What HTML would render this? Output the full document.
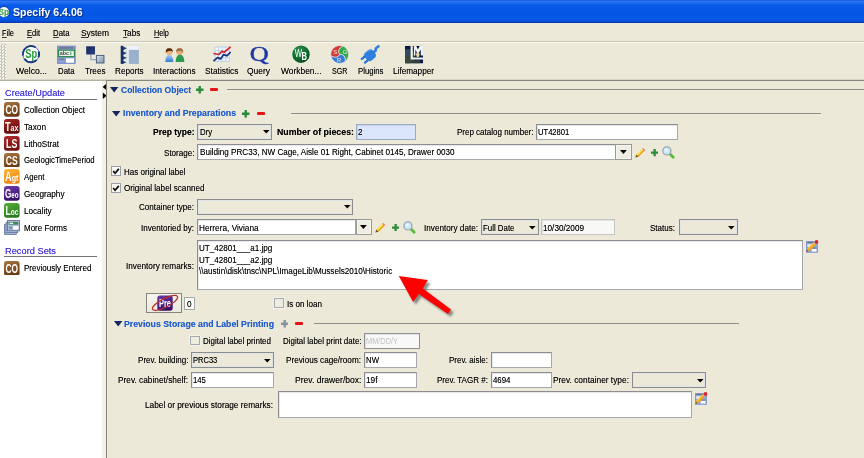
<!DOCTYPE html><html><head><meta charset="utf-8"><title>Specify 6.4.06</title><style>
html,body{margin:0;padding:0;}body{width:864px;height:458px;overflow:hidden;background:#ECE9D8;font-family:"Liberation Sans", sans-serif;position:relative;}
#app{position:absolute;left:0;top:0;width:864px;height:458px;overflow:hidden;}
#app div,#app svg{position:absolute;box-sizing:border-box;}
#app .t{white-space:nowrap;line-height:1;transform-origin:0 0;}
#app svg text{opacity:.999;}#app u{text-decoration:underline;text-underline-offset:1px;text-decoration-thickness:.8px;text-decoration-color:#3a3a3a;}
</style></head><body><div id="app">
<div style="left:0px;top:0px;width:864px;height:23px;background:linear-gradient(to bottom,#1654e0 0%,#2d79f4 6%,#1c6aee 13%,#075ae8 24%,#0456e4 60%,#065be9 80%,#0651dd 89%,#0841c6 96%,#0a38b4 100%);"></div>
<svg style="left:0;top:4px" width="12" height="16" viewBox="0 4 12 16"><circle cx="4" cy="11.7" r="5.6" fill="#16307a" opacity=".55"/><circle cx="4" cy="12.1" r="5.1" fill="#f6faf6"/><text x="-1.6" y="15" font-size="8.3" font-weight="bold" fill="#2f9e40" font-family="Liberation Sans, sans-serif">Sp</text></svg>
<div style="left:0px;top:41px;width:864px;height:1px;background:#c9c6b6;"></div>
<div style="left:0px;top:42px;width:864px;height:1px;background:#fbfaf4;"></div>
<div style="left:0px;top:44px;width:6px;height:35px;background:repeating-conic-gradient(#c6c4b6 0% 25%,#f7f6ef 0% 50%) 0 0/3px 3px;opacity:.95"></div>
<div style="left:0px;top:79px;width:864px;height:1px;background:#d8d5c8;"></div>
<div style="left:0px;top:80px;width:107px;height:1px;background:#b4b2a8;"></div>
<svg style="left:0;top:42px" width="440" height="24" viewBox="0 42 440 24"><circle cx="31" cy="54.1" r="8.3" fill="#fdfefd"/><circle cx="31" cy="54.1" r="8.2" fill="none" stroke="#4a64a8" stroke-width="0.9"/><circle cx="31" cy="54.1" r="8.1" fill="none" stroke="#1d3a86" stroke-width="2" stroke-dasharray="19 5 6 3 14 3.9" transform="rotate(170 31 54.1)"/><text x="25.3" y="57.7" font-size="12.4" font-weight="bold" fill="#1f9a36" textLength="11.9" lengthAdjust="spacingAndGlyphs" font-family="Liberation Sans, sans-serif">Sp</text><rect x="57.1" y="45.8" width="18.4" height="18" fill="#8ba0d6"/><rect x="57.6" y="46.3" width="17.4" height="17" fill="none" stroke="#7a8ec8" stroke-width="1"/><rect x="59" y="47.3" width="14.6" height="1.3" fill="#666a76"/><rect x="58.6" y="50.2" width="15.8" height="6.4" fill="#eef6ee" stroke="#2b8a4c" stroke-width="1.2"/><text x="59.8" y="55.2" font-size="5.4" font-weight="bold" fill="#444" font-family="Liberation Sans, sans-serif">abc</text><rect x="70.3" y="51.4" width="1" height="4" fill="#3a9a5a"/><rect x="59" y="58.6" width="5.4" height="1.4" fill="#767a8a"/><rect x="66" y="58.3" width="8" height="4.4" fill="#fff"/><defs><linearGradient id="tr1" x1="0" y1="0" x2="1" y2="1"><stop offset="0" stop-color="#16265c"/><stop offset="1" stop-color="#2b4486"/></linearGradient><linearGradient id="tr2" x1="0" y1="0" x2="1" y2="1"><stop offset="0" stop-color="#dfe5ea"/><stop offset="1" stop-color="#7d93ab"/></linearGradient></defs><path d="M90.9 54 V59.6 H96.5" fill="none" stroke="#92a8c0" stroke-width="1.3"/><rect x="86.2" y="46.3" width="8.8" height="8.2" fill="url(#tr1)"/><rect x="96.4" y="55.4" width="7.6" height="7.6" fill="url(#tr2)" stroke="#45557a" stroke-width="0.9"/><rect x="126.5" y="45.9" width="12.4" height="18" fill="#9ab1cd"/><rect x="126.5" y="45.9" width="12.4" height="4" fill="#eef2f8"/><rect x="126.5" y="49.9" width="2.4" height="14" fill="#e6ecf4"/><rect x="120.7" y="45.8" width="2.6" height="18.1" fill="#1a2f66"/><path d="M123 46.6 l3.8 1.6 l-3.8 2z M123 51.4 l3.8 1.6 l-3.8 2z M123 56.2 l3.8 1.6 l-3.8 2z M123 60.8 l3.4 1.4 l-3.4 1.6z" fill="#22386e"/><defs><linearGradient id="pb" x1="0" y1="0" x2="0" y2="1"><stop offset="0" stop-color="#b4d2f4"/><stop offset="1" stop-color="#2f7ad6"/></linearGradient></defs><path d="M165.3 62 q0.4 -7.6 4 -7.6 q3.6 0 4 7.6z" fill="url(#pb)"/><circle cx="169.3" cy="51.5" r="3.4" fill="#eeb27a"/><path d="M165.7 52.4 a3.6 3.8 0 0 1 7.2 -0.6 q-3 -2.2 -7.2 0.6z" fill="#4e2a0e"/><path d="M175.6 62 q0.4 -7.6 4.4 -7.6 q4 0 4.4 7.6z" fill="#2a9c4e"/><circle cx="179.6" cy="51.5" r="3.4" fill="#e6aa74"/><path d="M176 51.8 a3.6 3.8 0 0 1 7.2 0.6 q-2.4 -3 -7.2 -0.6z" fill="#96704a"/><rect x="215" y="47" width="14.4" height="14.4" fill="#f4f7fb"/><path d="M215 47H229.4M215 50.6H229.4M215 54.2H229.4M215 57.8H229.4M215 61.4H229.4M215 47V61.4M218.6 47V61.4M222.2 47V61.4M225.8 47V61.4M229.4 47V61.4" stroke="#b4c8e6" stroke-width="0.8" fill="none"/><path d="M213.5 53.5 L218.7 54.5 L221.9 51.4 L224.4 52.2 L230.6 46.8" stroke="#d4202a" stroke-width="1.7" fill="none" stroke-linejoin="round"/><path d="M213.5 61.2 L217.5 57.6 L220.6 58.9 L223.7 54.6 L226.9 55.8 L230.6 52" stroke="#16307e" stroke-width="1.7" fill="none" stroke-linejoin="round"/><defs><radialGradient id="wbg" cx="0.38" cy="0.3" r="0.75"><stop offset="0" stop-color="#2f9450"/><stop offset="0.6" stop-color="#0d6a2c"/><stop offset="1" stop-color="#07491d"/></radialGradient></defs><circle cx="300.6" cy="54.6" r="9.1" fill="#dfeee2"/><circle cx="301" cy="54.2" r="8.7" fill="url(#wbg)"/><text x="294.7" y="57" font-size="11" fill="#fff" textLength="7.3" lengthAdjust="spacingAndGlyphs" font-family="Liberation Sans, sans-serif">W</text><text x="301.5" y="60" font-size="10.2" font-weight="bold" fill="#fff" textLength="5.5" lengthAdjust="spacingAndGlyphs" font-family="Liberation Sans, sans-serif">B</text><path d="M339.70 54.40 Q337.37 59.40 330.94 55.95 A8.9 8.9 0 0 1 342.74 46.04 Q336.54 49.88 339.70 54.40z" fill="#d23a36" stroke="#f0f0ee" stroke-width="0.6"/><path d="M339.70 54.40 Q336.54 49.88 342.74 46.04 A8.9 8.9 0 0 1 345.42 61.22 Q345.20 53.92 339.70 54.40z" fill="#36a84a" stroke="#f0f0ee" stroke-width="0.6"/><path d="M339.70 54.40 Q345.20 53.92 345.42 61.22 A8.9 8.9 0 0 1 330.94 55.95 Q337.37 59.40 339.70 54.40z" fill="#3b7ad4" stroke="#f0f0ee" stroke-width="0.6"/><text x="333.2" y="53.6" font-size="6.2" fill="#fbeaea" font-family="Liberation Sans, sans-serif">S</text><text x="342.8" y="54.4" font-size="6.2" fill="#eafbea" font-family="Liberation Sans, sans-serif">G</text><text x="336.8" y="61.6" font-size="6.2" fill="#eaf0fb" font-family="Liberation Sans, sans-serif">R</text><g transform="rotate(-40 371 54.4)"><rect x="364.4" y="49.4" width="10.6" height="10" rx="3.6" fill="#2f80de"/><path d="M365 50.4 q4 -1.6 8.6 0.6" stroke="#5aa0ee" stroke-width="1" fill="none"/><rect x="360" y="50.9" width="5.4" height="2.2" rx="0.8" fill="#2a72cf"/><rect x="360" y="55.7" width="5.4" height="2.2" rx="0.8" fill="#2a72cf"/><path d="M374.4 54.4 h2.8 l1.2 -1.4 h3.6" stroke="#2f80de" stroke-width="2.6" fill="none" stroke-linecap="round" stroke-linejoin="round"/></g><defs><clipPath id="lmc"><rect x="405" y="45.8" width="18.1" height="17.7"/></clipPath></defs><g clip-path="url(#lmc)"><rect x="405" y="45.8" width="18.1" height="17.7" fill="#0c1844"/><circle cx="408" cy="56.5" r="7.4" fill="#46583a" opacity=".8"/><circle cx="407" cy="52.5" r="3" fill="#2a4a7a" opacity=".8"/><path d="M413 63.5 h7 v-3.4 h-7z" fill="#3a4a3a" opacity=".8"/></g><path d="M410.6 46 h2.2 v11.6 h10.3 v2 h-12.5z" fill="#f2f2f6"/><path d="M413.9 46 h2.4 l1.6 3.4 l1.8 -3.4 h3.3 v9.4 h-2.2 v-6 l-2.4 4 h-1 l-2 -4 v6 h-1.5z" fill="#f4f4f8"/><ellipse cx="417.8" cy="54.6" rx="1.7" ry="2.6" fill="#ead8a6"/></svg>
<svg style="left:246px;top:42px" width="28" height="26" viewBox="246 42 28 26"><text x="249.8" y="61" font-size="21" fill="#1c38a6" stroke="#1c38a6" stroke-width="0.45" textLength="19" lengthAdjust="spacingAndGlyphs" font-family="Liberation Serif, serif">Q</text></svg>
<div style="left:0px;top:81px;width:102px;height:377px;background:#fff;"></div>
<div style="left:102px;top:81px;width:5px;height:377px;background:#f3f1e8;"></div>
<svg style="left:101.5px;top:83px" width="5" height="17" viewBox="0 0 5 17"><path d="M4.6 0.6 L0.6 3.9 L4.6 7.2z" fill="#000"/><path d="M0.8 9.4 L4.6 12.7 L0.8 16z" fill="#000"/></svg>
<div style="left:106px;top:80px;width:758px;height:1px;background:#86867e;"></div>
<div style="left:106px;top:80px;width:1px;height:378px;background:#86867e;"></div>
<div style="left:4px;top:99px;width:93px;height:1px;background:#747474;"></div>
<div style="left:4px;top:256.4px;width:93px;height:1px;background:#747474;"></div>
<svg style="left:4.3px;top:102.3px" width="15.6" height="14.8" viewBox="0 0 15.6 14.8"><defs><linearGradient id="g10230" x1="0" y1="0" x2="0.3" y2="1"><stop offset="0" stop-color="#a87842"/><stop offset="1" stop-color="#6a3a12"/></linearGradient></defs><rect x="0" y="0" width="15.6" height="14.8" rx="2.8" fill="url(#g10230)"/><text x="1.5" y="12" font-weight="bold" fill="#fff" textLength="12.6" lengthAdjust="spacingAndGlyphs" font-family="Liberation Sans, sans-serif"><tspan font-size="12">CO</tspan></text></svg>
<svg style="left:4.3px;top:119.09px" width="15.6" height="14.8" viewBox="0 0 15.6 14.8"><defs><linearGradient id="g11909" x1="0" y1="0" x2="0.3" y2="1"><stop offset="0" stop-color="#a42424"/><stop offset="1" stop-color="#650c0c"/></linearGradient></defs><rect x="0" y="0" width="15.6" height="14.8" rx="2.8" fill="url(#g11909)"/><text x="1.0" y="12" font-weight="bold" fill="#fff" textLength="13.4" lengthAdjust="spacingAndGlyphs" font-family="Liberation Sans, sans-serif"><tspan font-size="12">T</tspan><tspan font-size="9.2">ax</tspan></text></svg>
<svg style="left:4.3px;top:135.88px" width="15.6" height="14.8" viewBox="0 0 15.6 14.8"><defs><linearGradient id="g13588" x1="0" y1="0" x2="0.3" y2="1"><stop offset="0" stop-color="#b42a2a"/><stop offset="1" stop-color="#701010"/></linearGradient></defs><rect x="0" y="0" width="15.6" height="14.8" rx="2.8" fill="url(#g13588)"/><text x="2.1" y="12" font-weight="bold" fill="#fff" textLength="11.4" lengthAdjust="spacingAndGlyphs" font-family="Liberation Sans, sans-serif"><tspan font-size="12">LS</tspan></text></svg>
<svg style="left:4.3px;top:152.67px" width="15.6" height="14.8" viewBox="0 0 15.6 14.8"><defs><linearGradient id="g15266" x1="0" y1="0" x2="0.3" y2="1"><stop offset="0" stop-color="#a87842"/><stop offset="1" stop-color="#6a3a12"/></linearGradient></defs><rect x="0" y="0" width="15.6" height="14.8" rx="2.8" fill="url(#g15266)"/><text x="1.8" y="12" font-weight="bold" fill="#fff" textLength="12" lengthAdjust="spacingAndGlyphs" font-family="Liberation Sans, sans-serif"><tspan font-size="12">CS</tspan></text></svg>
<svg style="left:4.3px;top:169.45999999999998px" width="15.6" height="14.8" viewBox="0 0 15.6 14.8"><defs><linearGradient id="g16945" x1="0" y1="0" x2="0.3" y2="1"><stop offset="0" stop-color="#fdb83c"/><stop offset="1" stop-color="#ee8410"/></linearGradient></defs><rect x="0" y="0" width="15.6" height="14.8" rx="2.8" fill="url(#g16945)"/><text x="1.0" y="12" font-weight="bold" fill="#fff" textLength="13.4" lengthAdjust="spacingAndGlyphs" font-family="Liberation Sans, sans-serif"><tspan font-size="12">A</tspan><tspan font-size="9.2">gt</tspan></text></svg>
<svg style="left:4.3px;top:186.25px" width="15.6" height="14.8" viewBox="0 0 15.6 14.8"><defs><linearGradient id="g18625" x1="0" y1="0" x2="0.3" y2="1"><stop offset="0" stop-color="#6e3eae"/><stop offset="1" stop-color="#36126a"/></linearGradient></defs><rect x="0" y="0" width="15.6" height="14.8" rx="2.8" fill="url(#g18625)"/><text x="0.9" y="12" font-weight="bold" fill="#fff" textLength="13.6" lengthAdjust="spacingAndGlyphs" font-family="Liberation Sans, sans-serif"><tspan font-size="12">G</tspan><tspan font-size="9.2">eo</tspan></text></svg>
<svg style="left:4.3px;top:203.04px" width="15.6" height="14.8" viewBox="0 0 15.6 14.8"><defs><linearGradient id="g20304" x1="0" y1="0" x2="0.3" y2="1"><stop offset="0" stop-color="#56b038"/><stop offset="1" stop-color="#2a7a20"/></linearGradient></defs><rect x="0" y="0" width="15.6" height="14.8" rx="2.8" fill="url(#g20304)"/><text x="1.4" y="12" font-weight="bold" fill="#fff" textLength="13.0" lengthAdjust="spacingAndGlyphs" font-family="Liberation Sans, sans-serif"><tspan font-size="12">L</tspan><tspan font-size="9.2">oc</tspan></text></svg>
<svg style="left:4.3px;top:219.82999999999998px" width="16" height="15.4" viewBox="0 0 16 15.4"><rect x="0.6" y="4.4" width="11.6" height="10" fill="#aebcd6" stroke="#6478a0" stroke-width="0.9"/><rect x="2" y="2.6" width="11.6" height="10" fill="#b8c6de" stroke="#6478a0" stroke-width="0.9"/><rect x="3.4" y="0.6" width="12" height="10.2" fill="#b4c4e0" stroke="#586c98" stroke-width="0.9"/><rect x="4.6" y="1.9" width="9.6" height="2.8" fill="#3a8a58"/><rect x="5.6" y="2.6" width="3.6" height="1.4" fill="#eaf6ea"/><rect x="4.8" y="6.4" width="3.6" height="3" fill="#8494b6"/><rect x="9.2" y="6.2" width="5.2" height="3.4" fill="#fff"/></svg>
<svg style="left:4.3px;top:260.6px" width="15.6" height="14.8" viewBox="0 0 15.6 14.8"><defs><linearGradient id="g26060" x1="0" y1="0" x2="0.3" y2="1"><stop offset="0" stop-color="#a87842"/><stop offset="1" stop-color="#6a3a12"/></linearGradient></defs><rect x="0" y="0" width="15.6" height="14.8" rx="2.8" fill="url(#g26060)"/><text x="1.5" y="12" font-weight="bold" fill="#fff" textLength="12.6" lengthAdjust="spacingAndGlyphs" font-family="Liberation Sans, sans-serif"><tspan font-size="12">CO</tspan></text></svg>
<svg style="left:110px;top:86.5px" width="9" height="6" viewBox="0 0 9 6"><path d="M0 0 H8.4 L4.2 5.6z" fill="#14265c"/></svg>
<svg style="left:196px;top:86px" width="7.5" height="7.5" viewBox="0 0 7.5 7.5"><path d="M2.5500000000000003 0 h2.4 v2.5500000000000003 h2.5500000000000003 v2.4 h-2.5500000000000003 v2.5500000000000003 h-2.4 v-2.5500000000000003 h-2.5500000000000003 v-2.4 h2.5500000000000003z" fill="#2e8b3a"/></svg>
<div style="left:210px;top:88px;width:8px;height:3px;background:#e8141c;border-radius:1px;"></div>
<div style="left:227px;top:89px;width:637px;height:1px;background:#8f8f8a;"></div>
<svg style="left:112px;top:110.9px" width="9" height="6" viewBox="0 0 9 6"><path d="M0 0 H8.4 L4.2 5.6z" fill="#14265c"/></svg>
<svg style="left:242px;top:110.3px" width="7.5" height="7.5" viewBox="0 0 7.5 7.5"><path d="M2.5500000000000003 0 h2.4 v2.5500000000000003 h2.5500000000000003 v2.4 h-2.5500000000000003 v2.5500000000000003 h-2.4 v-2.5500000000000003 h-2.5500000000000003 v-2.4 h2.5500000000000003z" fill="#2e8b3a"/></svg>
<div style="left:257px;top:112px;width:8px;height:3px;background:#e8141c;border-radius:1px;"></div>
<div style="left:290.5px;top:113px;width:530px;height:1px;background:#8f8f8a;"></div>
<svg style="left:113.5px;top:320.5px" width="9" height="6" viewBox="0 0 9 6"><path d="M0 0 H8.4 L4.2 5.6z" fill="#14265c"/></svg>
<svg style="left:280.5px;top:320px" width="7.5" height="7.5" viewBox="0 0 7.5 7.5"><path d="M2.5500000000000003 0 h2.4 v2.5500000000000003 h2.5500000000000003 v2.4 h-2.5500000000000003 v2.5500000000000003 h-2.4 v-2.5500000000000003 h-2.5500000000000003 v-2.4 h2.5500000000000003z" fill="#8a94a0"/></svg>
<div style="left:295px;top:322px;width:8px;height:3px;background:#e8141c;border-radius:1px;"></div>
<div style="left:314px;top:323px;width:425px;height:1px;background:#8f8f8a;"></div>
<div style="left:197px;top:123.5px;width:75px;height:16px;background:#ECE9D8;border:1px solid #8c8c8c;box-shadow:inset 0 0 0 1px #dfe3ea;"></div>
<svg style="left:262.5px;top:130.3px" width="7" height="4" viewBox="0 0 7 4"><path d="M0 0 H6.6 L3.3 3.6z" fill="#000"/></svg>
<div style="left:356px;top:123.5px;width:60px;height:16px;background:#dbe6fd;border:1px solid #98acc8;border-right-color:#98acc8;border-bottom-color:#98acc8;box-shadow:inset 1px 1px 0 rgba(120,130,150,.18);"></div>
<div style="left:536px;top:123.5px;width:141.5px;height:16px;background:#fff;border:1px solid #8b8c90;border-right-color:#a6a7aa;border-bottom-color:#a6a7aa;box-shadow:inset 1px 1px 0 rgba(120,130,150,.18);"></div>
<div style="left:197px;top:144px;width:418.5px;height:16px;background:#fff;border:1px solid #8b8c90;border-right-color:#a6a7aa;border-bottom-color:#a6a7aa;box-shadow:inset 1px 1px 0 rgba(120,130,150,.18);"></div>
<div style="left:615px;top:144px;width:16.5px;height:16px;background:#efede1;border:1px solid #989894;box-shadow:inset 0 0 0 1px #f6f5ee;"></div>
<svg style="left:619.85px;top:150.0px" width="7" height="4" viewBox="0 0 7 4"><path d="M0 0 H6.8 L3.4 3.9z" fill="#000"/></svg>
<svg style="left:634.7px;top:146.8px" width="11" height="11" viewBox="0 0 11 11"><path d="M0.4 10.6 L1.3 7.6 L8 0.9 L10.1 3 L3.4 9.7z" fill="#f7cf26"/><path d="M1.3 7.6 L8 0.9 L8.8 1.7 L2.1 8.4z" fill="#fbe680"/><path d="M2.7 9 L9.4 2.3 L10.1 3 L3.4 9.7z" fill="#e09a18"/><path d="M0.4 10.6 L1.3 7.6 L3.4 9.7z" fill="#6a5038"/><path d="M7.2 1.7 L8 0.9 L10.1 3 L9.3 3.8z" fill="#dc78c0"/></svg>
<svg style="left:651px;top:149.3px" width="7.3" height="7.3" viewBox="0 0 7.3 7.3"><path d="M2.482 0 h2.336 v2.482 h2.482 v2.336 h-2.482 v2.482 h-2.336 v-2.482 h-2.482 v-2.336 h2.482z" fill="#2e8b3a"/></svg>
<svg style="left:662.4px;top:146px" width="13" height="13" viewBox="0 0 13 13"><path d="M8 8 L11.2 11.2" stroke="#52bc34" stroke-width="2.7" stroke-linecap="round"/><circle cx="4.9" cy="4.9" r="4" fill="#cbe8f8" stroke="#9aa6b2" stroke-width="1.3"/><circle cx="4.2" cy="4" r="1.6" fill="#e8f6fd"/></svg>
<div style="left:111px;top:166px;width:10px;height:10px;background:#f7f6f0;border:1px solid #9aa0aa;"></div>
<svg style="left:112.2px;top:167.6px" width="8" height="7" viewBox="0 0 8 7"><path d="M1.2 3 L3.1 5.2 L6.8 0.9" fill="none" stroke="#0a0a0a" stroke-width="1.7"/></svg>
<div style="left:111px;top:183px;width:10px;height:10px;background:#f7f6f0;border:1px solid #9aa0aa;"></div>
<svg style="left:112.2px;top:184.6px" width="8" height="7" viewBox="0 0 8 7"><path d="M1.2 3 L3.1 5.2 L6.8 0.9" fill="none" stroke="#0a0a0a" stroke-width="1.7"/></svg>
<div style="left:197px;top:198.5px;width:156px;height:16px;background:#ECE9D8;border:1px solid #8c8c8c;box-shadow:inset 0 0 0 1px #dfe3ea;"></div>
<svg style="left:343.5px;top:205.3px" width="7" height="4" viewBox="0 0 7 4"><path d="M0 0 H6.6 L3.3 3.6z" fill="#000"/></svg>
<div style="left:197px;top:219px;width:159px;height:16px;background:#fff;border:1px solid #8b8c90;border-right-color:#a6a7aa;border-bottom-color:#a6a7aa;box-shadow:inset 1px 1px 0 rgba(120,130,150,.18);"></div>
<div style="left:355.5px;top:219px;width:16px;height:16px;background:#efede1;border:1px solid #989894;box-shadow:inset 0 0 0 1px #f6f5ee;"></div>
<svg style="left:360.1px;top:225.0px" width="7" height="4" viewBox="0 0 7 4"><path d="M0 0 H6.8 L3.4 3.9z" fill="#000"/></svg>
<svg style="left:374.8px;top:221.7px" width="11" height="11" viewBox="0 0 11 11"><path d="M0.4 10.6 L1.3 7.6 L8 0.9 L10.1 3 L3.4 9.7z" fill="#f7cf26"/><path d="M1.3 7.6 L8 0.9 L8.8 1.7 L2.1 8.4z" fill="#fbe680"/><path d="M2.7 9 L9.4 2.3 L10.1 3 L3.4 9.7z" fill="#e09a18"/><path d="M0.4 10.6 L1.3 7.6 L3.4 9.7z" fill="#6a5038"/><path d="M7.2 1.7 L8 0.9 L10.1 3 L9.3 3.8z" fill="#dc78c0"/></svg>
<svg style="left:391.8px;top:224.2px" width="7.3" height="7.3" viewBox="0 0 7.3 7.3"><path d="M2.482 0 h2.336 v2.482 h2.482 v2.336 h-2.482 v2.482 h-2.336 v-2.482 h-2.482 v-2.336 h2.482z" fill="#2e8b3a"/></svg>
<svg style="left:403.2px;top:221px" width="13" height="13" viewBox="0 0 13 13"><path d="M8 8 L11.2 11.2" stroke="#52bc34" stroke-width="2.7" stroke-linecap="round"/><circle cx="4.9" cy="4.9" r="4" fill="#cbe8f8" stroke="#9aa6b2" stroke-width="1.3"/><circle cx="4.2" cy="4" r="1.6" fill="#e8f6fd"/></svg>
<div style="left:481px;top:219px;width:57.5px;height:16px;background:#ECE9D8;border:1px solid #8c8c8c;box-shadow:inset 0 0 0 1px #dfe3ea;"></div>
<svg style="left:529.0px;top:225.8px" width="7" height="4" viewBox="0 0 7 4"><path d="M0 0 H6.6 L3.3 3.6z" fill="#000"/></svg>
<div style="left:541px;top:219px;width:74px;height:16px;background:#f8f8f6;border:1px solid #c6c6c2;border-right-color:#c6c6c2;border-bottom-color:#c6c6c2;box-shadow:inset 1px 1px 0 rgba(120,130,150,.18);"></div>
<div style="left:678.5px;top:219px;width:59px;height:16px;background:#ECE9D8;border:1px solid #8c8c8c;box-shadow:inset 0 0 0 1px #dfe3ea;"></div>
<svg style="left:728.0px;top:225.8px" width="7" height="4" viewBox="0 0 7 4"><path d="M0 0 H6.6 L3.3 3.6z" fill="#000"/></svg>
<div style="left:197px;top:240px;width:606px;height:50px;background:#fff;border:1px solid #8b8c90;border-right-color:#a6a7aa;border-bottom-color:#a6a7aa;box-shadow:inset 1px 1px 0 rgba(120,130,150,.18);"></div>
<svg style="left:805.9px;top:240px" width="13" height="13" viewBox="0 0 13 13"><rect x="0" y="1.2" width="11.8" height="11.4" fill="#8ea6d8"/><rect x="0.4" y="1.6" width="11" height="10.6" fill="none" stroke="#7f97cc" stroke-width="0.8"/><rect x="1.4" y="1.9" width="9" height="1.1" fill="#6c7080"/><rect x="1.4" y="4.2" width="4.4" height="2.8" fill="#e8eef8"/><rect x="5.7" y="8.9" width="4.8" height="2.7" fill="#fff"/><rect x="5.7" y="7.6" width="4.8" height="0.9" fill="#6c7080"/><path d="M0.5 11.8 L1.5 8.6 L7.6 2.6 L9.7 4.7 L3.7 10.8z" fill="#f6a414"/><path d="M1.5 8.6 L7.6 2.6 L8.3 3.3 L2.2 9.4z" fill="#fbc850"/><path d="M0.5 11.8 L1.1 9.8 L2.5 11.2z" fill="#5a4a30"/><path d="M7.6 2.6 L8.6 1.6 L10.7 3.7 L9.7 4.7z" fill="#b8bcc4"/><circle cx="10.5" cy="1.9" r="1.85" fill="#dc2030"/></svg>
<svg style="left:392px;top:268px" width="70" height="54" viewBox="392 268 70 54"><defs><filter id="sh" x="-20%" y="-20%" width="150%" height="150%"><feGaussianBlur stdDeviation="1.1"/></filter></defs><g transform="translate(2.6,2.8)" filter="url(#sh)" opacity=".6"><path d="M398.8 276 L427.8 280.1 L422.9 288.4 L451 309.5 L448 313.9 L418.8 293.9 L413.1 301.9z" fill="#444"/></g><path d="M398.8 276 L427.8 280.1 L422.9 288.4 L451 309.5 L448 313.9 L418.8 293.9 L413.1 301.9z" fill="#ff0000"/></svg>
<div style="left:146px;top:293px;width:36px;height:20px;background:linear-gradient(#f6f5ee,#eceadc);border:1px solid #85857e;"></div>
<svg style="left:150px;top:294px" width="30" height="18" viewBox="0 0 30 18"><defs><linearGradient id="pg" x1="0" y1="0" x2="0.4" y2="1"><stop offset="0" stop-color="#6b3bab"/><stop offset="1" stop-color="#38106c"/></linearGradient></defs><rect x="7.3" y="1.5" width="15.4" height="15.2" rx="2.6" fill="url(#pg)"/><text x="9" y="13" font-size="10.4" font-weight="bold" fill="#fff" textLength="12" lengthAdjust="spacingAndGlyphs" font-family="Liberation Sans, sans-serif">Pre</text><ellipse cx="15" cy="8.9" rx="14" ry="4.3" fill="none" stroke="#b8302e" stroke-width="1.3" transform="rotate(-27 15 8.9)"/></svg>
<div style="left:184px;top:297px;width:11px;height:13px;background:#fff;border:1px solid #a8a8a4;"></div>
<div style="left:274px;top:298px;width:10px;height:10px;background:#efeddf;border:1px solid #a6a8b2;box-shadow:0 0 0 1px rgba(255,255,255,.45);"></div>
<div style="left:190px;top:336px;width:10px;height:9px;background:#efeddf;border:1px solid #a6a8b2;box-shadow:0 0 0 1px rgba(255,255,255,.45);"></div>
<div style="left:364px;top:333px;width:56px;height:16px;background:#f8f8f8;border:1px solid #8f8f8f;border-right-color:#8f8f8f;border-bottom-color:#8f8f8f;box-shadow:inset 1px 1px 0 rgba(120,130,150,.18);"></div>
<div style="left:191px;top:352px;width:82.5px;height:16px;background:#ECE9D8;border:1px solid #8c8c8c;box-shadow:inset 0 0 0 1px #dfe3ea;"></div>
<svg style="left:264.0px;top:358.8px" width="7" height="4" viewBox="0 0 7 4"><path d="M0 0 H6.6 L3.3 3.6z" fill="#000"/></svg>
<div style="left:364px;top:352px;width:52.5px;height:16px;background:#fff;border:1px solid #8b8c90;border-right-color:#a6a7aa;border-bottom-color:#a6a7aa;box-shadow:inset 1px 1px 0 rgba(120,130,150,.18);"></div>
<div style="left:491px;top:352px;width:60.5px;height:16px;background:#fff;border:1px solid #8b8c90;border-right-color:#a6a7aa;border-bottom-color:#a6a7aa;box-shadow:inset 1px 1px 0 rgba(120,130,150,.18);"></div>
<div style="left:191px;top:372px;width:82.5px;height:16px;background:#fff;border:1px solid #8b8c90;border-right-color:#a6a7aa;border-bottom-color:#a6a7aa;box-shadow:inset 1px 1px 0 rgba(120,130,150,.18);"></div>
<div style="left:364px;top:372px;width:52.5px;height:16px;background:#fff;border:1px solid #8b8c90;border-right-color:#a6a7aa;border-bottom-color:#a6a7aa;box-shadow:inset 1px 1px 0 rgba(120,130,150,.18);"></div>
<div style="left:491px;top:372px;width:60.5px;height:16px;background:#fff;border:1px solid #8b8c90;border-right-color:#a6a7aa;border-bottom-color:#a6a7aa;box-shadow:inset 1px 1px 0 rgba(120,130,150,.18);"></div>
<div style="left:632px;top:372px;width:74px;height:16px;background:#ECE9D8;border:1px solid #8c8c8c;box-shadow:inset 0 0 0 1px #dfe3ea;"></div>
<svg style="left:696.5px;top:378.8px" width="7" height="4" viewBox="0 0 7 4"><path d="M0 0 H6.6 L3.3 3.6z" fill="#000"/></svg>
<div style="left:278px;top:391px;width:414px;height:27px;background:#fff;border:1px solid #8b8c90;border-right-color:#a6a7aa;border-bottom-color:#a6a7aa;box-shadow:inset 1px 1px 0 rgba(120,130,150,.18);"></div>
<svg style="left:694.6px;top:391.6px" width="13" height="13" viewBox="0 0 13 13"><rect x="0" y="1.2" width="11.8" height="11.4" fill="#8ea6d8"/><rect x="0.4" y="1.6" width="11" height="10.6" fill="none" stroke="#7f97cc" stroke-width="0.8"/><rect x="1.4" y="1.9" width="9" height="1.1" fill="#6c7080"/><rect x="1.4" y="4.2" width="4.4" height="2.8" fill="#e8eef8"/><rect x="5.7" y="8.9" width="4.8" height="2.7" fill="#fff"/><rect x="5.7" y="7.6" width="4.8" height="0.9" fill="#6c7080"/><path d="M0.5 11.8 L1.5 8.6 L7.6 2.6 L9.7 4.7 L3.7 10.8z" fill="#f6a414"/><path d="M1.5 8.6 L7.6 2.6 L8.3 3.3 L2.2 9.4z" fill="#fbc850"/><path d="M0.5 11.8 L1.1 9.8 L2.5 11.2z" fill="#5a4a30"/><path d="M7.6 2.6 L8.6 1.6 L10.7 3.7 L9.7 4.7z" fill="#b8bcc4"/><circle cx="10.5" cy="1.9" r="1.85" fill="#dc2030"/></svg>
<div class="t" style="left:12.70px;top:8.15px;font-size:10.1px;color:#fff;font-weight:bold;transform:scaleX(1.0422);text-shadow:1px 1px 1px #0a2a80;">Specify 6.4.06</div>
<div class="t" style="left:2.00px;top:28.79px;font-size:8.4px;color:#000;transform:scaleX(0.8879);text-shadow:0 0 .5px #00000080;"><u>F</u>ile</div>
<div class="t" style="left:27.00px;top:28.79px;font-size:8.4px;color:#000;transform:scaleX(0.8995);text-shadow:0 0 .5px #00000080;"><u>E</u>dit</div>
<div class="t" style="left:52.50px;top:28.79px;font-size:8.4px;color:#000;transform:scaleX(0.9312);text-shadow:0 0 .5px #00000080;"><u>D</u>ata</div>
<div class="t" style="left:81.00px;top:28.79px;font-size:8.4px;color:#000;transform:scaleX(1.0022);text-shadow:0 0 .5px #00000080;"><u>S</u>ystem</div>
<div class="t" style="left:122.80px;top:28.79px;font-size:8.4px;color:#000;transform:scaleX(0.9829);text-shadow:0 0 .5px #00000080;"><u>T</u>abs</div>
<div class="t" style="left:153.70px;top:28.79px;font-size:8.4px;color:#000;transform:scaleX(0.8638);text-shadow:0 0 .5px #00000080;"><u>H</u>elp</div>
<div class="t" style="left:16.00px;top:66.79px;font-size:8.4px;color:#000;transform:scaleX(1.0296);text-shadow:0 0 .5px #00000080;">Welco...</div>
<div class="t" style="left:57.50px;top:66.79px;font-size:8.4px;color:#000;transform:scaleX(0.9320);text-shadow:0 0 .5px #00000080;">Data</div>
<div class="t" style="left:84.50px;top:66.79px;font-size:8.4px;color:#000;transform:scaleX(0.9711);text-shadow:0 0 .5px #00000080;">Trees</div>
<div class="t" style="left:114.50px;top:66.79px;font-size:8.4px;color:#000;transform:scaleX(0.9718);text-shadow:0 0 .5px #00000080;">Reports</div>
<div class="t" style="left:152.50px;top:66.79px;font-size:8.4px;color:#000;transform:scaleX(0.9816);text-shadow:0 0 .5px #00000080;">Interactions</div>
<div class="t" style="left:204.50px;top:66.79px;font-size:8.4px;color:#000;transform:scaleX(0.9995);text-shadow:0 0 .5px #00000080;">Statistics</div>
<div class="t" style="left:247.00px;top:66.79px;font-size:8.4px;color:#000;transform:scaleX(1.0082);text-shadow:0 0 .5px #00000080;">Query</div>
<div class="t" style="left:280.50px;top:66.79px;font-size:8.4px;color:#000;transform:scaleX(1.0039);text-shadow:0 0 .5px #00000080;">Workben...</div>
<div class="t" style="left:331.50px;top:66.79px;font-size:8.4px;color:#000;transform:scaleX(0.8537);text-shadow:0 0 .5px #00000080;">SGR</div>
<div class="t" style="left:358.00px;top:66.79px;font-size:8.4px;color:#000;transform:scaleX(0.9283);text-shadow:0 0 .5px #00000080;">Plugins</div>
<div class="t" style="left:393.00px;top:66.79px;font-size:8.4px;color:#000;transform:scaleX(0.9784);text-shadow:0 0 .5px #00000080;">Lifemapper</div>
<div class="t" style="left:5.00px;top:87.69px;font-size:9.7px;color:#3324d6;transform:scaleX(0.9521);text-shadow:0 0 .5px #3324d680;">Create/Update</div>
<div class="t" style="left:5.00px;top:246.09px;font-size:9.7px;color:#3324d6;transform:scaleX(0.9566);text-shadow:0 0 .5px #3324d680;">Record Sets</div>
<div class="t" style="left:24.00px;top:106.09px;font-size:8.4px;color:#000;transform:scaleX(0.9635);text-shadow:0 0 .5px #00000080;">Collection Object</div>
<div class="t" style="left:24.00px;top:122.88px;font-size:8.4px;color:#000;transform:scaleX(0.9839);text-shadow:0 0 .5px #00000080;">Taxon</div>
<div class="t" style="left:24.00px;top:139.67px;font-size:8.4px;color:#000;transform:scaleX(0.9760);text-shadow:0 0 .5px #00000080;">LithoStrat</div>
<div class="t" style="left:24.00px;top:156.46px;font-size:8.4px;color:#000;transform:scaleX(0.9341);text-shadow:0 0 .5px #00000080;">GeologicTimePeriod</div>
<div class="t" style="left:24.00px;top:173.25px;font-size:8.4px;color:#000;transform:scaleX(0.9365);text-shadow:0 0 .5px #00000080;">Agent</div>
<div class="t" style="left:24.00px;top:190.04px;font-size:8.4px;color:#000;transform:scaleX(0.9774);text-shadow:0 0 .5px #00000080;">Geography</div>
<div class="t" style="left:24.00px;top:206.83px;font-size:8.4px;color:#000;transform:scaleX(0.9681);text-shadow:0 0 .5px #00000080;">Locality</div>
<div class="t" style="left:24.00px;top:223.62px;font-size:8.4px;color:#000;transform:scaleX(0.9526);text-shadow:0 0 .5px #00000080;">More Forms</div>
<div class="t" style="left:24.00px;top:263.89px;font-size:8.4px;color:#000;transform:scaleX(0.9602);text-shadow:0 0 .5px #00000080;">Previously Entered</div>
<div class="t" style="left:121.20px;top:85.65px;font-size:8.8px;color:#1e5bd0;font-weight:bold;transform:scaleX(0.9690);text-shadow:0 0 .5px #1e5bd080;">Collection Object</div>
<div class="t" style="left:122.50px;top:109.45px;font-size:8.8px;color:#1e5bd0;font-weight:bold;transform:scaleX(0.9920);text-shadow:0 0 .5px #1e5bd080;">Inventory and Preparations</div>
<div class="t" style="left:124.00px;top:319.65px;font-size:8.8px;color:#1e5bd0;font-weight:bold;transform:scaleX(0.9898);text-shadow:0 0 .5px #1e5bd080;">Previous Storage and Label Printing</div>
<div class="t" style="left:152.50px;top:128.29px;font-size:8.4px;color:#000;font-weight:bold;transform:scaleX(1.0130);text-shadow:0 0 .5px #00000080;">Prep type:</div>
<div class="t" style="left:199.80px;top:128.09px;font-size:8.4px;color:#000;transform:scaleX(0.9362);text-shadow:0 0 .5px #00000080;">Dry</div>
<div class="t" style="left:277.00px;top:128.29px;font-size:8.4px;color:#000;font-weight:bold;transform:scaleX(1.0537);text-shadow:0 0 .5px #00000080;">Number of pieces:</div>
<div class="t" style="left:358.00px;top:128.09px;font-size:8.4px;color:#000;transform:scaleX(0.9632);text-shadow:0 0 .5px #00000080;">2</div>
<div class="t" style="left:456.50px;top:128.29px;font-size:8.4px;color:#000;transform:scaleX(0.9553);text-shadow:0 0 .5px #00000080;">Prep catalog number:</div>
<div class="t" style="left:538.20px;top:128.09px;font-size:8.4px;color:#000;transform:scaleX(0.9085);text-shadow:0 0 .5px #00000080;">UT42801</div>
<div class="t" style="left:163.50px;top:149.09px;font-size:8.4px;color:#000;transform:scaleX(0.9630);text-shadow:0 0 .5px #00000080;">Storage:</div>
<div class="t" style="left:199.60px;top:148.39px;font-size:8.4px;color:#000;transform:scaleX(0.9672);text-shadow:0 0 .5px #00000080;">Building PRC33, NW Cage, Aisle 01 Right, Cabinet 0145, Drawer 0030</div>
<div class="t" style="left:124.00px;top:167.59px;font-size:8.4px;color:#000;transform:scaleX(0.9572);text-shadow:0 0 .5px #00000080;">Has original label</div>
<div class="t" style="left:124.00px;top:184.09px;font-size:8.4px;color:#000;transform:scaleX(0.9713);text-shadow:0 0 .5px #00000080;">Original label scanned</div>
<div class="t" style="left:139.00px;top:202.99px;font-size:8.4px;color:#000;transform:scaleX(0.9681);text-shadow:0 0 .5px #00000080;">Container type:</div>
<div class="t" style="left:141.00px;top:224.29px;font-size:8.4px;color:#000;transform:scaleX(0.9647);text-shadow:0 0 .5px #00000080;">Inventoried by:</div>
<div class="t" style="left:199.40px;top:223.89px;font-size:8.4px;color:#000;transform:scaleX(0.9874);text-shadow:0 0 .5px #00000080;">Herrera, Viviana</div>
<div class="t" style="left:424.00px;top:224.29px;font-size:8.4px;color:#000;transform:scaleX(0.9746);text-shadow:0 0 .5px #00000080;">Inventory date:</div>
<div class="t" style="left:483.00px;top:223.89px;font-size:8.4px;color:#000;transform:scaleX(0.9399);text-shadow:0 0 .5px #00000080;">Full Date</div>
<div class="t" style="left:543.00px;top:223.89px;font-size:8.4px;color:#000;transform:scaleX(0.9780);text-shadow:0 0 .5px #00000080;">10/30/2009</div>
<div class="t" style="left:650.00px;top:224.29px;font-size:8.4px;color:#000;transform:scaleX(0.9587);text-shadow:0 0 .5px #00000080;">Status:</div>
<div class="t" style="left:126.00px;top:261.89px;font-size:8.4px;color:#000;transform:scaleX(0.9804);text-shadow:0 0 .5px #00000080;">Inventory remarks:</div>
<div class="t" style="left:198.80px;top:243.89px;font-size:8.4px;color:#000;transform:scaleX(0.9643);text-shadow:0 0 .5px #00000080;">UT_42801___a1.jpg</div>
<div class="t" style="left:198.80px;top:255.89px;font-size:8.4px;color:#000;transform:scaleX(0.9643);text-shadow:0 0 .5px #00000080;">UT_42801___a2.jpg</div>
<div class="t" style="left:198.80px;top:266.89px;font-size:8.4px;color:#000;transform:scaleX(0.9697);text-shadow:0 0 .5px #00000080;">\\austin\disk\tnsc\NPL\ImageLib\Mussels2010\Historic</div>
<div class="t" style="left:187.20px;top:300.19px;font-size:8.4px;color:#000;transform:scaleX(0.9846);text-shadow:0 0 .5px #00000080;">0</div>
<div class="t" style="left:287.00px;top:299.89px;font-size:8.4px;color:#000;transform:scaleX(0.9634);text-shadow:0 0 .5px #00000080;">Is on loan</div>
<div class="t" style="left:203.00px;top:336.89px;font-size:8.4px;color:#000;transform:scaleX(0.9546);text-shadow:0 0 .5px #00000080;">Digital label printed</div>
<div class="t" style="left:282.50px;top:336.89px;font-size:8.4px;color:#000;transform:scaleX(0.9472);text-shadow:0 0 .5px #00000080;">Digital label print date:</div>
<div class="t" style="left:365.80px;top:337.49px;font-size:8.4px;color:#c4c4c6;transform:scaleX(0.8816);text-shadow:none;">MM/DD/Y</div>
<div class="t" style="left:137.50px;top:355.89px;font-size:8.4px;color:#000;transform:scaleX(0.9628);text-shadow:0 0 .5px #00000080;">Prev. building:</div>
<div class="t" style="left:193.20px;top:356.09px;font-size:8.4px;color:#000;transform:scaleX(0.9000);text-shadow:0 0 .5px #00000080;">PRC33</div>
<div class="t" style="left:286.00px;top:355.89px;font-size:8.4px;color:#000;transform:scaleX(0.9764);text-shadow:0 0 .5px #00000080;">Previous cage/room:</div>
<div class="t" style="left:366.00px;top:356.09px;font-size:8.4px;color:#000;transform:scaleX(0.9317);text-shadow:0 0 .5px #00000080;">NW</div>
<div class="t" style="left:449.00px;top:355.89px;font-size:8.4px;color:#000;transform:scaleX(0.9556);text-shadow:0 0 .5px #00000080;">Prev. aisle:</div>
<div class="t" style="left:118.00px;top:375.89px;font-size:8.4px;color:#000;transform:scaleX(0.9914);text-shadow:0 0 .5px #00000080;">Prev. cabinet/shelf:</div>
<div class="t" style="left:193.20px;top:376.09px;font-size:8.4px;color:#000;transform:scaleX(0.9153);text-shadow:0 0 .5px #00000080;">145</div>
<div class="t" style="left:294.50px;top:375.89px;font-size:8.4px;color:#000;transform:scaleX(1.0228);text-shadow:0 0 .5px #00000080;">Prev. drawer/box:</div>
<div class="t" style="left:366.00px;top:376.09px;font-size:8.4px;color:#000;transform:scaleX(0.9866);text-shadow:0 0 .5px #00000080;">19f</div>
<div class="t" style="left:437.00px;top:375.89px;font-size:8.4px;color:#000;transform:scaleX(0.9611);text-shadow:0 0 .5px #00000080;">Prev. TAGR #:</div>
<div class="t" style="left:493.00px;top:376.09px;font-size:8.4px;color:#000;transform:scaleX(0.9388);text-shadow:0 0 .5px #00000080;">4694</div>
<div class="t" style="left:553.00px;top:375.89px;font-size:8.4px;color:#000;transform:scaleX(0.9973);text-shadow:0 0 .5px #00000080;">Prev. container type:</div>
<div class="t" style="left:145.00px;top:400.89px;font-size:8.4px;color:#000;transform:scaleX(0.9890);text-shadow:0 0 .5px #00000080;">Label or previous storage remarks:</div>
</div></body></html>
